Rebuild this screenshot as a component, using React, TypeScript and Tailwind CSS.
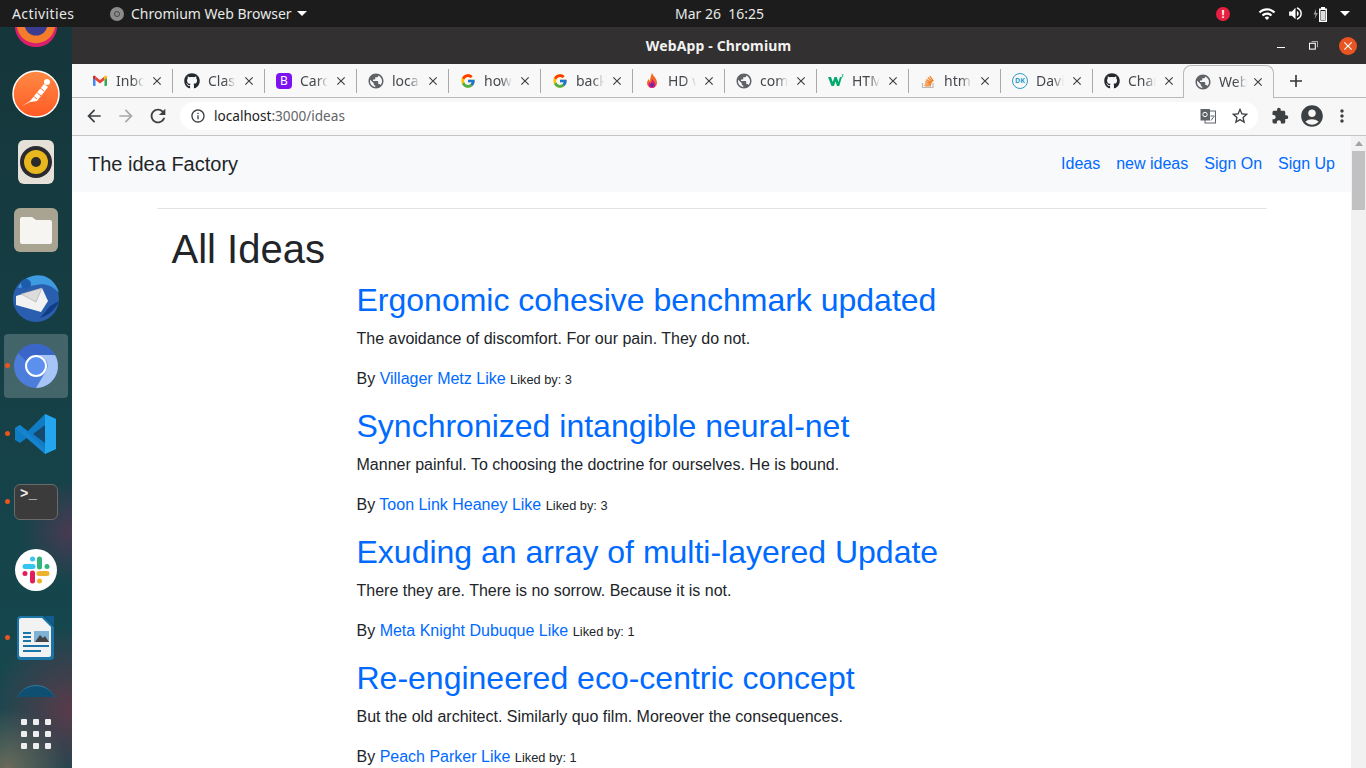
import { FaGithub } from "react-icons/fa"
import { FcGoogle } from "react-icons/fc"
import {
    MdAccountCircle,
    MdArrowBack,
    MdArrowForward,
    MdClose,
    MdExtension,
    MdInfoOutline,
    MdMoreVert,
    MdPublic,
    MdRefresh,
    MdStarBorder,
    MdVolumeUp,
    MdWifi,
} from "react-icons/md"
import type { ReactNode } from "react"

const ideas = [
    {
        title: "Ergonomic cohesive benchmark updated",
        body: "The avoidance of discomfort. For our pain. They do not.",
        author: "Villager Metz",
        likes: 3,
    },
    {
        title: "Synchronized intangible neural-net",
        body: "Manner painful. To choosing the doctrine for ourselves. He is bound.",
        author: "Toon Link Heaney",
        likes: 3,
    },
    {
        title: "Exuding an array of multi-layered Update",
        body: "There they are. There is no sorrow. Because it is not.",
        author: "Meta Knight Dubuque",
        likes: 1,
    },
    {
        title: "Re-engineered eco-centric concept",
        body: "But the old architect. Similarly quo film. Moreover the consequences.",
        author: "Peach Parker",
        likes: 1,
    },
]

function GmailIcon() {
    return (
        <svg viewBox="0 0 16 16" className="w-4 h-4">
            <path d="M1 13V5l2.500 1v7H2a1 1 0 0 1-1-1z" fill="#4285f4" />
            <path d="M15 13V5l-2.500 1v7H14a1 1 0 0 0 1-1z" fill="#34a853" />
            <path d="M3.500 7V3.500L8 7l4.500-3.500V7L8 10.500z" fill="#ea4335" />
            <path d="M1 5V4c0-1.200 1.500-1.800 2.500-1V7z" fill="#c5221f" />
            <path d="M15 5V4c0-1.200-1.500-1.800-2.500-1V7z" fill="#fbbc04" />
        </svg>
    )
}

function FlameIcon() {
    return (
        <svg viewBox="0 0 16 16" className="w-4 h-4">
            <path d="M8 0c1 3 5 5 5 10a5 5 0 0 1-10 0c0-2 1-3 2-4 0 1 .5 2 1 2 0-3 1-5 2-8z" fill="#f26a21" />
            <path d="M8.500 6c.5 2 3 3.500 3 5.500a3.500 3.500 0 0 1-7 0c0-1 .5-2 1.500-2.500 0 1 .5 1.500 1 1.500 0-2 1-3 1.500-4.500z" fill="#d6188f" />
            <circle cx="8" cy="12" r="1.800" fill="#5b2a9d" />
        </svg>
    )
}

function W3Icon() {
    return (
        <svg viewBox="0 0 16 16" className="w-4 h-4">
            <path d="M0 4h3l1.800 5L6.500 4h2.200l1.800 5 1.400-5h2l-2.600 9H9L7.500 8.500 6 13H3.500z" fill="#04aa6d" />
            <path d="M13.500 1.500h2.300l-1 1.200c.6.3.7 1.400-.3 1.500h-1l.2-.6h.7c.3 0 .3-.5 0-.5h-.5l.7-1h-1.100z" fill="#04aa6d" />
        </svg>
    )
}

function StackIcon() {
    return (
        <svg viewBox="0 0 16 16" className="w-4 h-4" fill="none">
            <path d="M2.500 10v4.500h10.500V10" stroke="#bcbbbb" strokeWidth="1.200" />
            <path d="M4.500 12.800h6.500M4.700 10.800l6.400.6M5.200 8.700l6.200 1.700M6.200 6.600l5.600 3M7.800 4.600l4.700 4.200M9.800 3l3.500 5.200" stroke="#f48024" strokeWidth="1.300" />
        </svg>
    )
}

function DkIcon() {
    return (
        <span className="w-4 h-4 rounded-full border-[1.5px] border-[#2b9fc9] flex items-center justify-center text-[7px] font-bold leading-none text-[#2b9fc9]">
            DK
        </span>
    )
}

const tabs: { label: string; icon: ReactNode }[] = [
    { label: "Inbox", icon: <GmailIcon /> },
    { label: "Class", icon: <FaGithub className="w-4 h-4 text-[#24292e]" /> },
    {
        label: "Cards",
        icon: (
            <span className="w-4 h-4 rounded-sm bg-[#7d11f0] text-white text-[12px] leading-4 text-center">B</span>
        ),
    },
    { label: "local", icon: <MdPublic className="w-[18px] h-[18px] -m-px text-[#5f6368]" /> },
    { label: "how", icon: <FcGoogle className="w-4 h-4" /> },
    { label: "back", icon: <FcGoogle className="w-4 h-4" /> },
    { label: "HD w", icon: <FlameIcon /> },
    { label: "com", icon: <MdPublic className="w-[18px] h-[18px] -m-px text-[#5f6368]" /> },
    { label: "HTML", icon: <W3Icon /> },
    { label: "html", icon: <StackIcon /> },
    { label: "David", icon: <DkIcon /> },
    { label: "Chart", icon: <FaGithub className="w-4 h-4 text-[#24292e]" /> },
]

function Caret() {
    return <span className="block w-0 h-0 border-x-[5px] border-x-transparent border-t-[5px] border-t-white" />
}

function TopBar() {
    return (
        <div className="h-[27px] shrink-0 bg-[#1c1c1c] text-[#e6e9e6] text-[14px] flex items-center font-['Noto_Sans',sans-serif]">
            <span className="ml-3 w-[98px] tracking-[0.4px]">Activities</span>
            <span className="w-[14px] h-[14px] rounded-full bg-[#8b8b8b] flex items-center justify-center">
                <span className="w-[6px] h-[6px] rounded-full border border-[#444]" />
            </span>
            <span className="ml-[7px] w-[166px]">Chromium Web Browser</span>
            <Caret />
            <span className="ml-[368px] whitespace-pre">Mar 26  16:25</span>
            <span className="ml-[452px] w-[14px] h-[14px] rounded-full bg-[#e8203f] text-white text-[11px] font-bold leading-[14px] text-center">
                !
            </span>
            <MdWifi className="ml-[28px] w-[18px] h-[18px] text-white" />
            <MdVolumeUp className="ml-[11px] w-[17px] h-[17px] text-white" />
            <svg viewBox="0 0 16 16" className="ml-[9px] w-4 h-4 text-white">
                <path d="M3 3L0.500 8.500H2.500L1.500 13L5 7H3z" fill="#999" />
                <path d="M8 1h4v1.500h2V16H6V2.500h2z M7.500 4v10.500h5V4z" fill="currentColor" fillRule="evenodd" />
                <rect x="8" y="5" width="4" height="9" fill="#ddd" />
            </svg>
            <span className="ml-[11px]">
                <Caret />
            </span>
        </div>
    )
}

function TitleBar() {
    return (
        <div className="h-[37px] shrink-0 bg-[#323031] text-white flex items-center relative font-['Noto_Sans',sans-serif]">
            <span className="flex-1 text-center text-[14px] tracking-[0.15px] font-bold text-[#f2f2f2] ml-[88px]">WebApp - Chromium</span>
            <span className="w-[8px] h-px bg-white mr-[24px] mt-[4px]" />
            <svg viewBox="0 0 10 10" className="w-[9px] h-[9px] mr-[21px]" fill="none" stroke="white">
                <rect x="0.500" y="2.500" width="6.500" height="6.500" strokeWidth="1.200" />
                <path d="M3 .5h6.500V7" strokeWidth="0.700" />
            </svg>
            <span className="w-[18px] h-[18px] rounded-full bg-[#e95420] flex items-center justify-center mr-[9px]">
                <MdClose className="w-[14px] h-[14px] text-white" />
            </span>
        </div>
    )
}

function Tab({ label, icon, active, last }: { label: string; icon: ReactNode; active?: boolean; last?: boolean }) {
    let box = "w-[92px] h-[24px] shrink-0 flex items-center pl-[11px] border-r border-[#a9a9a9]"
    if (active) {
        box = "w-[91px] h-[33px] shrink-0 flex items-center pl-[11px] bg-[#f7f7f7] border border-b-0 border-[#b9b9b9] rounded-t-lg relative top-px -mt-px z-10 -ml-[2px]"
    } else if (last) {
        box = "w-[92px] h-[24px] shrink-0 flex items-center pl-[11px]"
    }
    return (
        <div className={box}>
            <span className="w-4 h-4 flex items-center justify-center shrink-0">{icon}</span>
            <span className="ml-2 w-[28px] overflow-hidden whitespace-nowrap text-[14px] text-[#45494d] [mask-image:linear-gradient(to_right,black_60%,transparent)]">
                {label}
            </span>
            <MdClose className={active ? "ml-[4px] w-[14px] h-[14px] text-[#3c4043] shrink-0" : "ml-[6px] w-[14px] h-[14px] text-[#3c4043] shrink-0"} />
        </div>
    )
}

function TabStrip() {
    return (
        <div className="h-[34px] shrink-0 bg-[#f8f8f8] border-b border-[#b9b9b9] flex items-center pl-[9px] font-['Noto_Sans',sans-serif]">
            {tabs.map((tab, i) => (
                <Tab key={tab.label + i} label={tab.label} icon={tab.icon} last={i === tabs.length - 1} />
            ))}
            <Tab label="WebApp" icon={<MdPublic className="w-[18px] h-[18px] -m-px text-[#5f6368]" />} active />
            <svg viewBox="0 0 12 12" className="ml-[16px] w-3 h-3" stroke="#333" strokeWidth="1.600">
                <path d="M6 0v12M0 6h12" />
            </svg>
        </div>
    )
}

function Toolbar() {
    return (
        <div className="h-[38px] shrink-0 bg-[#f7f7f7] border-b border-[#c4c4c4] pb-px flex items-center font-['Noto_Sans',sans-serif]">
            <MdArrowBack className="ml-[12px] w-5 h-5 text-[#3c4043]" />
            <MdArrowForward className="ml-[12px] w-5 h-5 text-[#a8a8a8]" />
            <MdRefresh className="ml-[11px] w-[22px] h-[22px] text-[#3c4043]" />
            <div className="ml-[11px] w-[1078px] h-[28px] rounded-full bg-white flex items-center">
                <MdInfoOutline className="ml-[10px] w-4 h-4 text-[#3c4043]" />
                <span className="ml-[8px] text-[13.6px] text-[#1c1c1c]">
                    localhost<span className="text-[#5f6368]">:3000/ideas</span>
                </span>
                <svg viewBox="0 0 16 16" className="ml-auto w-4 h-4">
                    <rect x="5" y="3" width="10.500" height="12" fill="white" stroke="#5f6368" />
                    <rect x="0.500" y="1" width="9.500" height="11.500" rx="0.500" fill="#5f6368" />
                    <circle cx="5" cy="6.500" r="2.200" fill="none" stroke="white" />
                    <path d="M10.500 8h4M11 12.500l3-4" stroke="#5f6368" />
                </svg>
                <MdStarBorder className="ml-[14px] mr-[8px] w-[20px] h-[20px] text-[#3c4043]" />
            </div>
            <MdExtension className="ml-[13px] w-[18px] h-[18px] text-[#3c4043]" />
            <MdAccountCircle className="ml-[10px] w-[26px] h-[26px] text-[#3c4043]" />
            <MdMoreVert className="ml-[7px] w-[20px] h-[20px] text-[#3c4043]" />
        </div>
    )
}

function DockItem({ children, running, active }: { children: ReactNode; running?: boolean; active?: boolean }) {
    return (
        <div className="h-[68px] shrink-0 flex items-center justify-center relative">
            {running && <span className="absolute left-[5px] top-[31px] w-[5px] h-[5px] rounded-full bg-[#e95420]" />}
            <div className={active ? "w-[64px] h-[64px] rounded bg-white/20 flex items-center justify-center" : "flex items-center justify-center"}>
                {children}
            </div>
        </div>
    )
}

function Dock() {
    return (
        <div className="w-[72px] shrink-0 flex flex-col overflow-hidden bg-[radial-gradient(circle_at_10%_100%,#6b6a5a_0%,transparent_8%),radial-gradient(circle_at_100%_92%,#5a3a4a_0%,transparent_12%),radial-gradient(circle_at_100%_68%,#4a3a52_0%,transparent_10%),linear-gradient(#15363a,#164a52)]">
            <div className="flex-1 min-h-0 overflow-hidden">
                <div className="-mt-[35px] flex flex-col">
                    <DockItem>
                        <svg viewBox="0 0 48 48" className="w-[46px] h-[46px]">
                            <circle cx="24" cy="24" r="22" fill="#d8206f" />
                            <circle cx="24" cy="22" r="20" fill="#f57c2a" />
                            <circle cx="24" cy="22" r="12" fill="#3b3c8f" />
                        </svg>
                    </DockItem>
                    <DockItem>
                        <svg viewBox="0 0 48 48" className="w-[48px] h-[48px]">
                            <defs>
                                <linearGradient id="pm" x1="0" y1="0" x2="0" y2="1">
                                    <stop offset="0" stopColor="#ff8a45" />
                                    <stop offset="1" stopColor="#ff5a24" />
                                </linearGradient>
                            </defs>
                            <circle cx="24" cy="24" r="23" fill="url(#pm)" stroke="white" strokeWidth="1.500" />
                            <path d="M10 36l8-5 14-17 4 3-11 14-7 1z" fill="white" />
                            <circle cx="35" cy="12" r="3" fill="white" />
                            <path d="M23 21l6 5M20 25l5 4M27 17l5 4" stroke="#ff7234" strokeWidth="1" />
                        </svg>
                    </DockItem>
                    <DockItem>
                        <div className="w-[36px] h-[44px] rounded-md bg-[#e5e1d8] flex items-center justify-center">
                            <div className="w-[32px] h-[32px] rounded-full bg-[#2a2a30] flex items-center justify-center">
                                <div className="w-[24px] h-[24px] rounded-full bg-[#e8b71e] flex items-center justify-center">
                                    <div className="w-[10px] h-[10px] rounded-full bg-[#2b2b2b]" />
                                </div>
                            </div>
                        </div>
                    </DockItem>
                    <DockItem>
                        <div className="w-[44px] h-[44px] rounded-md bg-[#a9a392] flex items-center justify-center">
                            <svg viewBox="0 0 32 28" className="w-[32px] h-[28px]">
                                <path d="M0 3a2 2 0 0 1 2-2h10l4 3h14a2 2 0 0 1 2 2v20a2 2 0 0 1-2 2H2a2 2 0 0 1-2-2z" fill="#f7f5f2" />
                            </svg>
                        </div>
                    </DockItem>
                    <DockItem>
                        <svg viewBox="0 0 48 48" className="w-[48px] h-[48px]">
                            <circle cx="24" cy="25" r="23" fill="#2a5fb0" />
                            <path d="M6 14C10 4 22 -1 32 2c8 3 13 9 15 17-7-8-15-10-23-8z" fill="#3f9be0" />
                            <path d="M4 22l26-8 6 13-7 11-25-7z" fill="#f2f2f2" />
                            <path d="M9 20l15 8 6-14z" fill="#dcdcdc" stroke="#9a9a9a" strokeWidth="0.500" />
                            <path d="M28 44c9-3 16-9 19-17l-9 5z" fill="#123c85" />
                            <circle cx="14" cy="10" r="5" fill="#1d5cab" />
                        </svg>
                    </DockItem>
                    <DockItem running active>
                        <svg viewBox="0 0 44 44" className="w-[44px] h-[44px]">
                            <circle cx="22" cy="22" r="22" fill="#4c7ddb" />
                            <path d="M22 0a22 22 0 0 1 19 11H22a11 11 0 0 0-10 6L4 9A22 22 0 0 1 22 0z" fill="#3a66c8" />
                            <path d="M41 11a22 22 0 0 1-19 33l10-17a11 11 0 0 0 0-11z" fill="#a6c4f6" />
                            <path d="M41 11H22a11 11 0 0 1 10 6z" fill="#a6c4f6" />
                            <circle cx="22" cy="22" r="10" fill="#5b90ee" stroke="white" strokeWidth="2" />
                        </svg>
                    </DockItem>
                    <DockItem running>
                        <svg viewBox="0 0 44 44" className="w-[44px] h-[44px]">
                            <path d="M31 2l11 5v30l-11 5-17-17-8 6-5-3V16l5-3 8 6z" fill="#0f7cc4" />
                            <path d="M31 2l11 5v30l-11 5z" fill="#23a6ee" />
                            <path d="M31 13v18l-12-9z" fill="#17496e" />
                            <path d="M1 16l5-3 25 24v5L1 16z" fill="#1583cd" />
                        </svg>
                    </DockItem>
                    <DockItem running>
                        <div className="w-[44px] h-[36px] rounded-md bg-[#3b3b3b] border border-[#6a6a6a] pl-[5px] text-[#f0f0f0] text-[14px] leading-[18px] font-['Liberation_Mono',monospace] font-bold">
                            &gt;_
                        </div>
                    </DockItem>
                    <DockItem>
                        <div className="w-[42px] h-[42px] rounded-full bg-white flex items-center justify-center">
                            <svg viewBox="0 0 28 28" className="w-[28px] h-[28px]" fill="none" strokeWidth="5" strokeLinecap="round">
                                <path d="M3 10.500h8M10.500 3h.01" stroke="#36c5f0" />
                                <path d="M17.500 3v8M25 10.500h.01" stroke="#2eb67d" />
                                <path d="M25 17.500h-8M17.500 25h.01" stroke="#ecb22e" />
                                <path d="M10.500 25v-8M3 17.500h.01" stroke="#e01e5a" />
                            </svg>
                        </div>
                    </DockItem>
                    <DockItem running>
                        <svg viewBox="0 0 38 46" className="w-[38px] h-[46px]">
                            <path d="M4 1h22l11 11v29a4 4 0 0 1-4 4H4a4 4 0 0 1-4-4V5a4 4 0 0 1 4-4z" fill="#1b75a8" />
                            <path d="M27 1l10 0v10z" fill="#0e5d8c" />
                            <path d="M4 3h21l9 9v28a2 2 0 0 1-2 2H4a2 2 0 0 1-2-2V5a2 2 0 0 1 2-2z" fill="#f2f2f2" />
                            <path d="M6 17h8v2H6zM6 21h8v2H6zM6 25h8v2H6zM6 30h26v2H6zM6 35h18v2H6z" fill="#1b75a8" />
                            <rect x="17" y="16" width="15" height="11" fill="#7fb3d5" />
                            <path d="M18 27l5-7 3 3 2-2 4 6z" fill="#444" />
                        </svg>
                    </DockItem>
                    <DockItem>
                        <div className="w-[42px] h-[42px] rounded-full bg-[#0f4f72] border-t border-[#2f7a9c]" />
                    </DockItem>
                </div>
            </div>
            <div className="mt-[22px] mb-[19px] mx-auto grid grid-cols-3 gap-[6px]">
                {Array.from({ length: 9 }).map((_, i) => (
                    <span key={i} className="w-[6px] h-[6px] rounded-[1px] bg-[#eeeeee]" />
                ))}
            </div>
        </div>
    )
}

function Navbar() {
    return (
        <nav className="h-[56px] shrink-0 bg-[#f8f9fa] flex items-center justify-between px-4">
            <span className="text-[20px] text-[#212529]">The idea Factory</span>
            <div className="flex gap-4 text-[16px] text-[#006aff]">
                <a>Ideas</a>
                <a>new ideas</a>
                <a>Sign On</a>
                <a>Sign Up</a>
            </div>
        </nav>
    )
}

function Scrollbar() {
    return (
        <div className="w-[15px] shrink-0 bg-[#f1f1f1] flex flex-col items-center">
            <span className="mt-[5px] w-0 h-0 border-x-[4px] border-x-transparent border-b-[5px] border-b-[#a3a3a3]" />
            <span className="mt-[5px] w-[13px] h-[59px] bg-[#c1c1c1]" />
        </div>
    )
}

export default function App() {
    return (
        <main className="w-full h-screen overflow-hidden flex flex-col bg-white">
            <TopBar />
            <div className="flex-1 flex min-h-0">
                <Dock />
                <div className="flex-1 min-w-0 flex flex-col">
                    <TitleBar />
                    <TabStrip />
                    <Toolbar />
                    <div className="flex-1 flex min-h-0 font-['Liberation_Sans',sans-serif] text-[#212529]">
                        <div className="flex-1 min-w-0 overflow-hidden">
                            <Navbar />
                            <div className="w-[1110px] ml-[84.5px] mt-4">
                                <hr className="border-[#e2e2e2]" />
                                <h1 className="text-[40px] leading-[48px] mt-4 ml-[15px]">All Ideas</h1>
                                <div className="ml-[200px] mt-2">
                                    {ideas.map((idea) => (
                                        <article key={idea.title}>
                                            <h2 className="text-[32px] leading-[38px] text-[#006aff]">{idea.title}</h2>
                                            <p className="mt-2 text-[16px] leading-6">{idea.body}</p>
                                            <p className="mt-4 mb-4 text-[16px] leading-6">
                                                By <a className="text-[#006aff]">{idea.author}</a>{" "}
                                                <a className="text-[#006aff]">Like</a>{" "}
                                                <small className="text-[12.8px] leading-none">Liked by: {idea.likes}</small>
                                            </p>
                                        </article>
                                    ))}
                                </div>
                            </div>
                        </div>
                        <Scrollbar />
                    </div>
                </div>
            </div>
        </main>
    )
}
